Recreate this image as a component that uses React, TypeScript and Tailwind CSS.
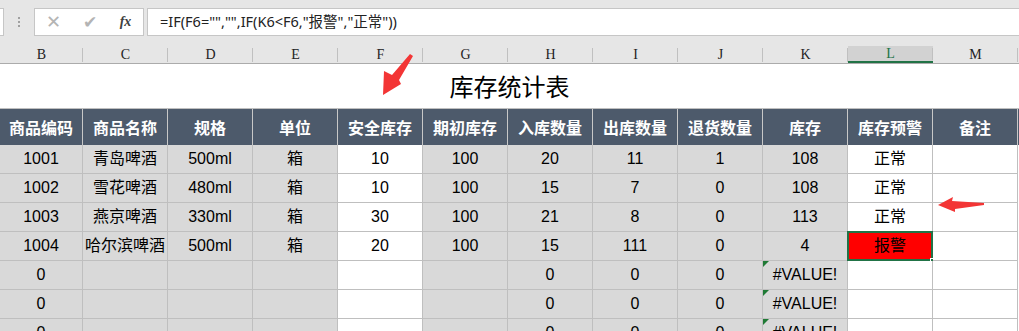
import React from "react";

const FONT = { fontFamily: '"Liberation Sans", "Noto Sans CJK SC", sans-serif' };

const headers = ["商品编码", "商品名称", "规格", "单位", "安全库存", "期初库存", "入库数量", "出库数量", "退货数量", "库存", "库存预警", "备注"];
const letters = ["B", "C", "D", "E", "F", "G", "H", "I", "J", "K", "L", "M"];

const dataRows: string[][] = [
  ["1001", "青岛啤酒", "500ml", "箱", "10", "100", "20", "11", "1", "108", "正常", ""],
  ["1002", "雪花啤酒", "480ml", "箱", "10", "100", "15", "7", "0", "108", "正常", ""],
  ["1003", "燕京啤酒", "330ml", "箱", "30", "100", "21", "8", "0", "113", "正常", ""],
  ["1004", "哈尔滨啤酒", "500ml", "箱", "20", "100", "15", "111", "0", "4", "报警", ""],
  ["0", "", "", "", "", "", "0", "0", "0", "#VALUE!", "", ""],
  ["0", "", "", "", "", "", "0", "0", "0", "#VALUE!", "", ""],
  ["0", "", "", "", "", "", "0", "0", "0", "#VALUE!", "", ""],
];

const whiteCols = [4, 10, 11];

function w(i: number) {
  return i === 0 ? "w-[83px]" : "w-[85px]";
}

export default function App() {
  return (
    <div className="relative w-[1019px] h-[331px] overflow-hidden bg-white" style={FONT}>
      {/* formula bar */}
      <div className="h-[46px] bg-[#e6e6e6] flex items-start pt-[8px]">
        <div className="w-[4px] h-[28px] bg-white border border-l-0 border-[#c6c6c6]" />
        <div className="w-[30px] h-[28px] flex flex-col items-center justify-center gap-[2px]">
          <span className="w-[2px] h-[2px] bg-[#a0a0a0]" />
          <span className="w-[2px] h-[2px] bg-[#a0a0a0]" />
          <span className="w-[2px] h-[2px] bg-[#a0a0a0]" />
        </div>
        <div className="w-[110px] h-[28px] bg-white border border-[#c6c6c6] flex items-center">
          <span className="w-[37px] text-center text-[#b4b4b4] text-[18px] leading-none" style={{ fontFamily: '"DejaVu Sans", sans-serif' }}>✕</span>
          <span className="w-[36px] text-center text-[#b4b4b4] text-[17px] leading-none" style={{ fontFamily: '"DejaVu Sans", sans-serif' }}>✔</span>
          <span className="w-[35px] text-center text-[#404040] text-[14px] italic font-bold leading-none" style={{ fontFamily: '"Liberation Serif", serif' }}>fx</span>
        </div>
        <div className="ml-[3px] flex-1 h-[28px] bg-white border border-r-0 border-[#c6c6c6] flex items-center pl-[12px] text-[14.5px] text-[#222]" style={{ fontFamily: '"Noto Sans", "Noto Sans CJK SC", sans-serif' }}>
          =IF(F6="","",IF(K6&lt;F6,"报警","正常"))
        </div>
      </div>

      {/* column letters */}
      <div className="flex h-[18px] bg-[#e6e6e6] border-b border-[#ababab]">
        {letters.map((l, i) => (
          <div
            key={l}
            className={`${w(i)} relative flex items-center justify-center text-[14px] leading-none ${
              l === "L" ? "bg-[#d2d2d2] text-[#217346] border-b-2 border-[#217346]" : "text-[#222]"
            }`}
            style={{ fontFamily: '"Liberation Serif", "DejaVu Serif", serif' }}
          >
            {l}
            <span className="absolute right-0 top-[2px] bottom-[1px] w-px bg-[#c0c0c0]" />
          </div>
        ))}
      </div>

      {/* title */}
      <div className="h-[44px] flex items-center justify-center text-[24px] text-black" style={{ fontFamily: '"Noto Sans CJK SC", sans-serif' }}>
        库存统计表
      </div>

      {/* header row */}
      <div className="flex h-[37px] border-t border-[#bfbfbf] bg-[#4d5a6b]">
        {headers.map((h, i) => (
          <div
            key={h}
            className={`${w(i)} h-full flex items-center justify-center border-r border-[#c8c8c8] text-white font-bold text-[16px]`}
            style={{ fontFamily: '"Noto Sans CJK SC", sans-serif' }}
          >
            {h}
          </div>
        ))}
      </div>

      {/* data rows */}
      {dataRows.map((row, r) => (
        <div key={r} className="flex h-[29px]">
          {row.map((c, i) => {
            const white = whiteCols.includes(i);
            const alarm = c === "报警";
            const err = c === "#VALUE!";
            return (
              <div
                key={i}
                className={`${w(i)} relative h-full flex items-center justify-center border-r border-b border-[#bfbfbf] text-[16px] text-black ${
                  alarm ? "bg-[#ff0000]" : white ? "bg-white" : "bg-[#d9d9d9]"
                }`}
                style={{ fontFamily: '"Liberation Sans", "Noto Sans CJK SC", sans-serif' }}
              >
                {err && (
                  <span className="absolute top-0 left-0 w-0 h-0 border-t-[6px] border-t-[#1f7a35] border-r-[6px] border-r-transparent" />
                )}
                {c}
                {alarm && (
                  <>
                    <span className="absolute -left-px -top-px -right-px -bottom-px border-2 border-[#217346]" />
                    <span className="absolute -right-[4px] -bottom-[4px] w-[6px] h-[6px] bg-[#217346] border border-white" />
                  </>
                )}
              </div>
            );
          })}
        </div>
      ))}

      {/* red arrows */}
      <svg className="absolute left-0 top-0 pointer-events-none" width="1019" height="331">
        <polygon points="410,54 413,56 399,80 401,84 383,95 384,71 392,75" fill="#f33535" />
        <polygon points="938,205 953,197 952,201 984,203 984,205 955,209 955,212" fill="#f33535" />
      </svg>
    </div>
  );
}
